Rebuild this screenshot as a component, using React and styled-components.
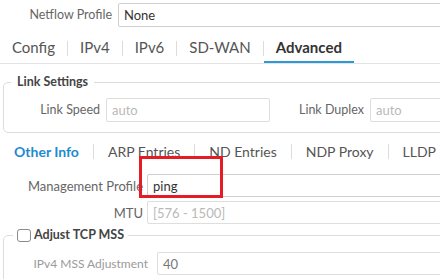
import React from "react";
import styled, { createGlobalStyle } from "styled-components";

const Global = createGlobalStyle`
  html, body { margin: 0; padding: 0; background: #fff; overflow: hidden; }
  * { box-sizing: border-box; }
`;

const Page = styled.div`
  position: relative;
  width: 440px;
  height: 279px;
  overflow: hidden;
  background: #fff;
  font-family: Lato, "Open Sans", Arial, sans-serif;
  color: #555;
`;

const FieldGrid = styled.div`
  display: grid;
  grid-template-columns: ${(p) => p.$cols};
  column-gap: ${(p) => p.$gap || 6}px;
  row-gap: 4px;
  align-items: center;
  margin-top: ${(p) => p.$mt || 0}px;
`;

const Label = styled.label`
  text-align: right;
  font-size: ${(p) => p.$size || 12.5}px;
  line-height: 18px;
  color: ${(p) => (p.$muted ? "#9a9a9a" : "#666")};
  white-space: nowrap;
`;

const Field = styled.input`
  width: 100%;
  height: ${(p) => p.$h || 24}px;
  border: 1px solid ${(p) => (p.$strong ? "#cfcfcf" : "#dedede")};
  border-radius: 2px;
  padding: 0 5px;
  font-family: Lato, "Open Sans", Arial, sans-serif;
  font-size: 13px;
  color: ${(p) => (p.$muted ? "#777" : "#333")};
  background: #fff;
  outline: none;
  &::placeholder { color: #b9b9b9; }
`;

const TabBar = styled.div`
  display: flex;
  align-items: stretch;
  height: 37px;
  padding-top: 6px;
  border-bottom: 1px solid #e3e3e3;
`;

const SubTabBar = styled.div`
  display: flex;
  align-items: stretch;
  height: 18px;
  margin-top: 9px;
`;

const Tab = styled.div`
  display: flex;
  align-items: center;
  padding: 0 ${(p) => p.$pad}px;
  font-size: ${(p) => p.$size}px;
  white-space: nowrap;
  border-bottom: ${(p) => (p.$bar ? "2px solid transparent" : "0")};
  border-bottom-color: ${(p) => (p.$active && p.$bar ? "#2d9ad6" : "transparent")};
  font-weight: ${(p) => (p.$active ? 700 : 400)};
  color: ${(p) => (p.$active ? (p.$blue ? "#1d8ad0" : "#333") : "#555")};
`;

const Sep = styled.span`
  width: 1px;
  height: 15px;
  align-self: center;
  background: #dcdcdc;
  flex: none;
`;

const Fieldset = styled.fieldset`
  margin: ${(p) => p.$mt}px 0 0 3px;
  width: 470px;
  border: 1px solid #dcdcdc;
  border-radius: 5px;
  padding: 0 0 10px ${(p) => p.$pl}px;
  min-width: 0;
`;

const Legend = styled.legend`
  padding: 0 ${(p) => p.$pad}px;
  font-size: 12.5px;
  font-weight: 700;
  line-height: 18px;
  color: #444;
  display: flex;
  align-items: center;
  gap: 3px;
`;

const Check = styled.span`
  width: 14px;
  height: 13px;
  border: 1.5px solid #8a8a8a;
  border-radius: 3px;
  background: #fff;
  flex: none;
`;

const Highlight = styled.div`
  position: absolute;
  left: 139px;
  top: 156px;
  width: 84px;
  height: 42px;
  border: 3px solid #e41c23;
  pointer-events: none;
`;

const mainTabs = ["Config", "IPv4", "IPv6", "SD-WAN", "Advanced"];
const subTabs = ["Other Info", "ARP Entries", "ND Entries", "NDP Proxy", "LLDP"];

function Tabs({ items, active, pad, size, bar, blue }) {
  return items.map((t, i) => (
    <React.Fragment key={t}>
      {i > 0 && <Sep />}
      <Tab $pad={pad} $size={size} $bar={bar} $blue={blue} $active={t === active}>
        {t}
      </Tab>
    </React.Fragment>
  ));
}

export default function App() {
  return (
    <Page>
      <Global />
      <FieldGrid $cols="112px 400px" $mt={3}>
        <Label>Netflow Profile</Label>
        <Field $strong readOnly defaultValue="None" />
      </FieldGrid>

      <TabBar>
        <Tabs items={mainTabs} active="Advanced" pad={12} size={15} bar />
      </TabBar>

      <Fieldset $mt={9} $pl={7}>
        <Legend $pad={6}>Link Settings</Legend>
        <FieldGrid $cols="89px 164px 88px 200px" $mt={7}>
          <Label>Link Speed</Label>
          <Field readOnly placeholder="auto" />
          <Label>Link Duplex</Label>
          <Field readOnly placeholder="auto" />
        </FieldGrid>
      </Fieldset>

      <SubTabBar>
        <Tabs items={subTabs} active="Other Info" pad={14} size={14} blue />
      </SubTabBar>

      <FieldGrid $cols="143px 400px" $gap={4} $mt={14}>
        <Label $size={13}>Management Profile</Label>
        <Field $h={23} $strong readOnly defaultValue="ping" />
        <Label $size={13}>MTU</Label>
        <Field $h={23} readOnly placeholder="[576 - 1500]" />
      </FieldGrid>

      <Fieldset $mt={2} $pl={9}>
        <Legend $pad={4}>
          <Check />
          Adjust TCP MSS
        </Legend>
        <FieldGrid $cols="135px 300px" $gap={9} $mt={8}>
          <Label $muted $size={12}>IPv4 MSS Adjustment</Label>
          <Field $h={23} $muted readOnly defaultValue="40" />
        </FieldGrid>
      </Fieldset>

      <Highlight />
    </Page>
  );
}
